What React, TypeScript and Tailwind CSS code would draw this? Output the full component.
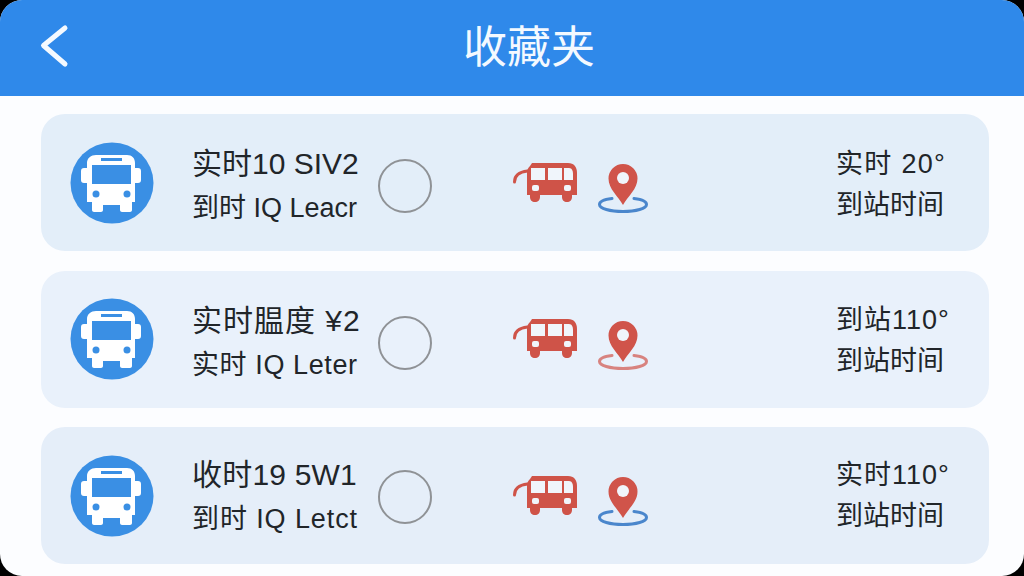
const FONT = "font-['Liberation_Sans','Noto_Sans_CJK_SC',sans-serif]";

function BusBadge() {
  return (
    <svg width="84" height="82" viewBox="0 0 84 82" className="shrink-0">
      <ellipse cx="42" cy="41" rx="41.500" ry="40.500" fill="#3a8fe4" />
      <path
        fill="#fff"
        d="M17 21c0-5 4-8 9-8h31c5 0 8 3 8 8v5h3c2 0 3 1 3 3v9c0 2-1 3-3 3h-3v19h-3v8c0 1-1 2-2 2h-8c-1 0-2-1-2-2v-5H33v5c0 1-1 2-2 2h-7c-1 0-2-1-2-2v-8h-5V41h-3c-2 0-3-1-3-3v-9c0-2 1-3 3-3h3z"
      />
      <rect x="22" y="23" width="39" height="19" fill="#3a8fe4" />
      <rect x="31" y="16" width="21" height="3" fill="#3a8fe4" />
      <circle cx="26" cy="52" r="3.500" fill="#3a8fe4" />
      <circle cx="57" cy="52" r="3.500" fill="#3a8fe4" />
    </svg>
  );
}

function RedBus() {
  return (
    <svg width="65" height="40" viewBox="0 0 65 40" className="shrink-0">
      <path d="M1.500 19c0-6 4-10 13-11" fill="none" stroke="#cf5348" strokeWidth="3" strokeLinecap="round" />
      <path
        fill="#cf5348"
        d="M14 9c0-2 1-4 3-6l2-3h36c6 0 9 4 9 10v22H59v2c0 3-2 5-5 5s-5-2-5-5v-2H27v2c0 3-2 5-5 5s-5-2-5-5v-2h-3z"
      />
      <rect x="18" y="5" width="14" height="12" fill="#f0f5fb" />
      <rect x="35" y="5" width="14" height="12" fill="#f0f5fb" />
      <path d="M51 5h5c3 0 4 3 4 6v6h-9z" fill="#f0f5fb" />
      <rect x="19" y="22" width="7" height="6" rx="2" fill="#f0f5fb" />
      <rect x="51" y="22" width="7" height="6" rx="2" fill="#f0f5fb" />
    </svg>
  );
}

function Pin({ ring, ringOpacity = 1 }: { ring: string; ringOpacity?: number }) {
  return (
    <svg width="52" height="52" viewBox="0 0 52 52" className="shrink-0">
      <path
        d="M15 36.500C7 37.500 2.500 39.500 2.500 42.500C2.500 46.500 13 49.500 26 49.500S49.500 46.500 49.500 42.500C49.500 39.500 45 37.500 37 36.500"
        fill="none"
        stroke={ring}
        strokeOpacity={ringOpacity}
        strokeWidth="3"
        strokeLinecap="round"
      />
      <path d="M26 43C21 34 11.500 27 11.500 16.500a14.500 14.500 0 0 1 29 0C40.500 27 31 34 26 43z" fill="#d0544a" />
      <circle cx="26" cy="16" r="6" fill="#f0f5fb" />
    </svg>
  );
}

type Row = {
  title: string;
  sub: string;
  right: string;
  ring: string;
  ringOpacity?: number;
  titleClass: string;
  subClass: string;
  rightClass: string;
  circleClass: string;
  textMt: string;
  rightMt: string;
  bg: string;
};

const rows: Row[] = [
  {
    title: "实时10 SIV2",
    sub: "到时 IQ Leacr",
    right: "实时 20°",
    ring: "#4a86cc",
    titleClass: "tracking-[0px]",
    subClass: "tracking-[0px]",
    rightClass: "tracking-[1.300px]",
    circleClass: "mt-[6px]",
    textMt: "mt-[4px]",
    rightMt: "mt-[3px]",
    bg: "bg-[#e3eef9]",
  },
  {
    title: "实时腽度 ¥2",
    sub: "实时 IQ Leter",
    right: "到站110°",
    ring: "#d0544a",
    ringOpacity: 0.7,
    titleClass: "tracking-[1px]",
    subClass: "tracking-[0.600px]",
    rightClass: "tracking-[1px]",
    circleClass: "mt-[8px]",
    textMt: "mt-[4px]",
    rightMt: "mt-[3px]",
    bg: "bg-[#e9f1fb]",
  },
  {
    title: "收时19 5W1",
    sub: "到时 IQ Letct",
    right: "实时110°",
    ring: "#4a86cc",
    titleClass: "tracking-[0.200px]",
    subClass: "tracking-[0.900px]",
    rightClass: "tracking-[1px]",
    circleClass: "mt-[2px]",
    textMt: "mt-[0px]",
    rightMt: "mt-[0px]",
    bg: "bg-[#e5eef9]",
  },
];

function Card({ row }: { row: Row }) {
  return (
    <div className={`flex h-[137px] items-center rounded-[24px] pl-[29px] ${row.bg}`}>
      <BusBadge />
      <div className={`ml-[38px] flex w-[186px] shrink-0 flex-col gap-[9px] text-[#212529] ${row.textMt}`}>
        <span className={`whitespace-nowrap text-[30px] leading-[38px] ${row.titleClass}`}>{row.title}</span>
        <span className={`whitespace-nowrap text-[27px] leading-[32px] ${row.subClass}`}>{row.sub}</span>
      </div>
      <div className={`h-[54px] w-[54px] shrink-0 rounded-full border-2 border-[#8f9296] ${row.circleClass}`} />
      <div className="ml-[81px] shrink-0"><RedBus /></div>
      <div className="ml-[19px] mt-[11px] shrink-0"><Pin ring={row.ring} ringOpacity={row.ringOpacity} /></div>
      <div className={`ml-[187px] flex flex-col gap-[5px] text-[27px] leading-[36px] text-[#212529] ${row.rightMt}`}>
        <span className={`whitespace-nowrap ${row.rightClass}`}>{row.right}</span>
        <span className="whitespace-nowrap">到站时间</span>
      </div>
    </div>
  );
}

export default function App() {
  return (
    <div className="h-[576px] w-[1024px] bg-black">
      <div className={`h-[576px] w-[1024px] overflow-hidden rounded-[22px] bg-[#fcfdff] ${FONT}`}>
        <header className="relative flex h-[96px] items-center justify-center bg-[#2f89ea]">
          <svg width="32" height="46" viewBox="0 0 32 46" className="absolute left-[39px] top-[23px]">
            <path d="M26 5 L4.500 22.500 L26 41" fill="none" stroke="#f4f9ff" strokeWidth="5" strokeLinecap="round" strokeLinejoin="round" />
          </svg>
          <h1 className="ml-[34px] text-[44px] font-normal leading-none text-[#f4f9ff]">收藏夹</h1>
        </header>
        <main className="flex flex-col gap-[19.500px] pl-[41px] pr-[35px] pt-[18px]">
          {rows.map((r) => (
            <Card key={r.right + r.title} row={r} />
          ))}
        </main>
      </div>
    </div>
  );
}
